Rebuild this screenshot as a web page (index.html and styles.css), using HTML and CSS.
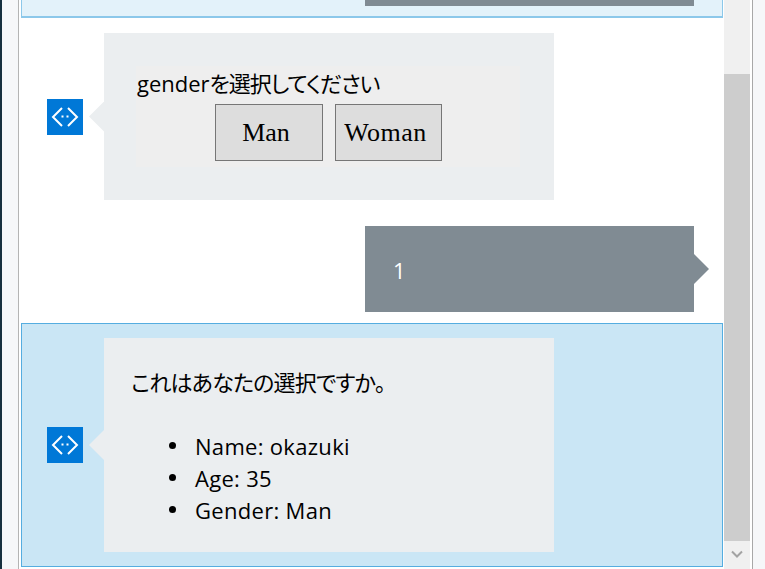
FILE: index.html
```html
<!DOCTYPE html>
<html lang="ja">
<head>
  <meta charset="UTF-8">
  <title>Bot Framework Emulator</title>
  <link rel="stylesheet" href="styles.css">
</head>
<body>
  <div class="edge"></div>
  <div class="sidebar"></div>
  <div class="chat">
    <div class="row row-user row-past">
      <div class="bubble bubble-user"></div>
    </div>

    <div class="row">
      <div class="bot-icon">
        <svg width="36" height="36" viewBox="0 0 36 36">
          <path d="M15 9 6 18l9 9M21 9l9 9-9 9" fill="none" stroke="#fff" stroke-width="2"/>
          <rect x="14.5" y="16.5" width="2" height="2" fill="#fff"/>
          <rect x="19.5" y="16.5" width="2" height="2" fill="#fff"/>
        </svg>
      </div>
      <div class="bubble bubble-bot bubble-form">
        <div class="form-card">
          <div class="form-title">gender<span class="ja">を選択してください</span></div>
          <div class="form-buttons">
            <button class="choice choice-man">Man</button>
            <button class="choice choice-woman">Woman</button>
          </div>
        </div>
      </div>
    </div>

    <div class="row row-user">
      <div class="bubble bubble-user">1</div>
    </div>

    <div class="row row-selected">
      <div class="bot-icon">
        <svg width="36" height="36" viewBox="0 0 36 36">
          <path d="M15 9 6 18l9 9M21 9l9 9-9 9" fill="none" stroke="#fff" stroke-width="2"/>
          <rect x="14.5" y="16.5" width="2" height="2" fill="#fff"/>
          <rect x="19.5" y="16.5" width="2" height="2" fill="#fff"/>
        </svg>
      </div>
      <div class="bubble bubble-bot bubble-text">
        <p>これはあなたの選択ですか。</p>
        <ul>
          <li>Name: okazuki</li>
          <li>Age: 35</li>
          <li>Gender: Man</li>
        </ul>
      </div>
    </div>
  </div>

  <div class="scrollbar">
    <div class="scroll-thumb"></div>
    <div class="scroll-down">
      <svg width="12" height="9" viewBox="0 0 12 9">
        <path d="M1 1.5 6 6.5l5-5" fill="none" stroke="#a3a3a3" stroke-width="2"/>
      </svg>
    </div>
  </div>
  <div class="sidebar sidebar-right"></div>
</body>
</html>
```

FILE: styles.css
```css
html, body {
  height: 100%;
}
body {
  margin: 0;
  display: flex;
  overflow: hidden;
  background: #fff;
  font-family: "Open Sans", "Noto Sans CJK JP", sans-serif;
  font-size: 22px;
  font-feature-settings: "palt";
  line-height: 32px;
  color: #000;
}
.edge {
  width: 2px;
  background: #17303f;
}
.sidebar {
  width: 16px;
  background: #f6f7f9;
  border-right: 1px solid #b4b4b4;
}
.sidebar-right {
  flex: 1;
  border-right: none;
  border-left: 1px solid #a8a8a8;
}
.chat {
  flex: 0 0 702px;
  display: flex;
  flex-direction: column;
  justify-content: flex-end;
  margin: 0 1px 0 2px;
  padding-bottom: 2px;
  overflow: hidden;
}
.row {
  flex: none;
  display: flex;
  align-items: center;
  padding: 15px 29px 11px 26px;
}
.row-user {
  justify-content: flex-end;
}
.row-past {
  background: #e3f2fa;
  border: 1px solid #8cc8ea;
  border-bottom-width: 2px;
  padding: 15px 28px 10px 25px;
}
.row-selected {
  background: #cae6f5;
  border: 1px solid #55ade0;
  padding: 14px 28px 14px 25px;
}
.bot-icon {
  width: 36px;
  height: 36px;
  background: #0078d7;
}
.bot-icon svg {
  display: block;
}
.bubble {
  position: relative;
  box-sizing: border-box;
}
.bubble::after {
  content: "";
  position: absolute;
  top: 50%;
  width: 15px;
  height: 30px;
  margin-top: -15px;
}
.bubble-bot {
  width: 450px;
  margin-left: 21px;
  background: #ebeef0;
}
.bubble-bot::after {
  left: -15px;
  background: #ebeef0;
  clip-path: polygon(100% 0, 0 50%, 100% 100%);
}
.bubble-user {
  width: 329px;
  height: 86px;
  padding: 28px 28px 26px;
  background: #808b93;
  color: #fff;
}
.bubble-user::after {
  right: -15px;
  background: #808b93;
  clip-path: polygon(0 0, 100% 50%, 0 100%);
}
.bubble-form {
  height: 167px;
  padding: 33px 34px 33px 32px;
}
.form-card {
  background: #eeeeee;
  height: 101px;
  padding-left: 1px;
}
.form-title {
  height: 38px;
  line-height: 34px;
}
.ja {
  letter-spacing: -1.1px;
}
.form-buttons {
  display: flex;
  justify-content: center;
  gap: 12px;
}
.choice {
  box-sizing: border-box;
  height: 57px;
  padding: 0 6px 0 0;
  background: #dddddd;
  border: 1px solid #767676;
  border-radius: 0;
  font-family: "Liberation Serif", serif;
  font-size: 26px;
  color: #000;
}
.choice-man {
  width: 108px;
}
.choice-woman {
  width: 107px;
  letter-spacing: 0.5px;
}
.bubble-text {
  height: 214px;
  padding: 28px 27px 0;
}
.bubble-text p {
  margin: 0 0 32px;
  letter-spacing: -0.8px;
}
.bubble-text ul {
  margin: 0;
  padding-left: 64px;
  list-style: none;
}
.bubble-text li {
  position: relative;
  letter-spacing: 0.3px;
}
.bubble-text li::before {
  content: "";
  position: absolute;
  left: -26px;
  top: 12px;
  width: 7px;
  height: 7px;
  border-radius: 50%;
  background: #000;
}
.scrollbar {
  flex: 0 0 26px;
  position: relative;
  background: #f0f0f0;
  margin-right: 2px;
}
.scroll-thumb {
  position: absolute;
  top: 74px;
  left: 0;
  right: 0;
  height: 467px;
  background: #cdcdcd;
}
.scroll-down {
  position: absolute;
  left: 7px;
  top: 550px;
}
.scroll-down svg {
  display: block;
}
```
